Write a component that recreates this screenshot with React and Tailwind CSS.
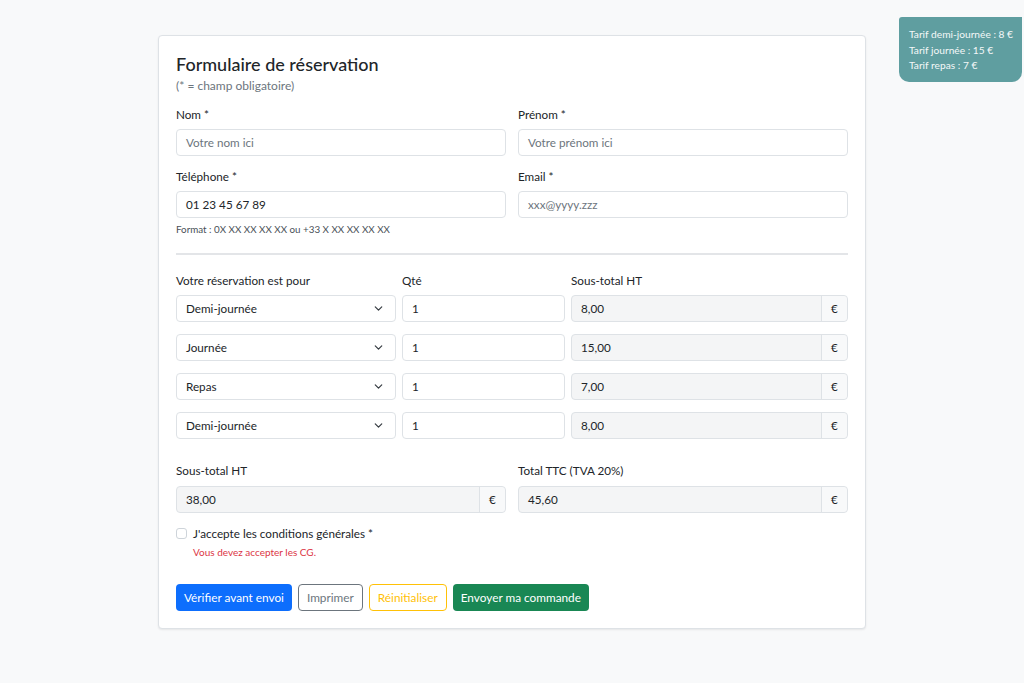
import { ChevronDown } from "lucide-react";

const lines = [
  { type: "Demi-journée", qty: "1", sub: "8,00" },
  { type: "Journée", qty: "1", sub: "15,00" },
  { type: "Repas", qty: "1", sub: "7,00" },
  { type: "Demi-journée", qty: "1", sub: "8,00" },
];

function Field({ label, value, placeholder }) {
  return (
    <div className="flex flex-col">
      <label className="text-[11.7px] text-[#212529] leading-[15px] mb-[7px]">{label}</label>
      <div className="h-[27px] border border-[#dee2e6] rounded-[4px] bg-white px-[9px] flex items-center text-[11.7px]">
        {value ? <span className="text-[#212529]">{value}</span> : <span className="text-[#6c757d]">{placeholder}</span>}
      </div>
    </div>
  );
}

function Money({ value }) {
  return (
    <div className="flex h-[27px] border border-[#dee2e6] rounded-[4px] bg-[#f4f5f6] text-[11.7px] text-[#212529]">
      <div className="flex-1 flex items-center px-[9px]">{value}</div>
      <div className="w-[26px] border-l border-[#dee2e6] flex items-center justify-center bg-[#f8f9fa] rounded-r-[4px]">€</div>
    </div>
  );
}

export default function App() {
  return (
    <div className="min-h-[683px] bg-[#f8f9fa] relative" style={{ fontFamily: 'Lato, "Noto Sans", sans-serif' }}>
      <div className="absolute right-[2px] top-[17px] w-[123px] h-[65px] bg-[#5f9ea0] text-[#f4f8f8] text-[10.2px] leading-[15.5px] pl-[10px] pt-[10px] rounded-tl-[3px] rounded-b-[10px]">
        <div>Tarif demi-journée : 8 €</div>
        <div>Tarif journée : 15 €</div>
        <div>Tarif repas : 7 €</div>
      </div>

      <div className="pt-[35px] pl-[158px]">
        <div className="w-[708px] h-[594px] bg-white border border-[#dee2e6] rounded-[4px] shadow-[0_1px_2px_rgba(0,0,0,0.08)] px-[17px] pt-[16px]">
          <h1 className="text-[18px] font-medium text-[#212529] leading-[24px]">Formulaire de réservation</h1>
          <p className="text-[12px] text-[#6c757d] leading-[14px] mt-[3px]">(* = champ obligatoire)</p>

          <div className="grid grid-cols-2 gap-x-[12px] mt-[14px]">
            <Field label="Nom *" placeholder="Votre nom ici" />
            <Field label="Prénom *" placeholder="Votre prénom ici" />
          </div>
          <div className="grid grid-cols-2 gap-x-[12px] mt-[13px]">
            <Field label="Téléphone *" value="01 23 45 67 89" />
            <Field label="Email *" placeholder="xxx@yyyy.zzz" />
          </div>
          <p className="text-[9.8px] text-[#495057] mt-[5px] leading-[12px]">Format : 0X XX XX XX XX ou +33 X XX XX XX XX</p>

          <hr className="border-t-2 border-[#e3e5e8] mt-[18px]" />

          <div className="grid grid-cols-[220px_163px_1fr] gap-x-[6px] mt-[18px]">
            <label className="text-[11.7px] text-[#212529] leading-[15px]">Votre réservation est pour</label>
            <label className="text-[11.7px] text-[#212529] leading-[15px]">Qté</label>
            <label className="text-[11.7px] text-[#212529] leading-[15px]">Sous-total HT</label>
          </div>
          <div className="flex flex-col gap-[12px] mt-[7px]">
            {lines.map((l, i) => (
              <div key={i} className="grid grid-cols-[220px_163px_1fr] gap-x-[6px]">
                <div className="h-[27px] border border-[#dee2e6] rounded-[4px] bg-white pl-[9px] pr-[10px] flex items-center justify-between text-[11.7px] text-[#212529]">
                  <span>{l.type}</span>
                  <ChevronDown size={13} strokeWidth={2.2} className="text-[#343a40]" />
                </div>
                <div className="h-[27px] border border-[#dee2e6] rounded-[4px] bg-white px-[9px] flex items-center text-[11.7px] text-[#212529]">{l.qty}</div>
                <Money value={l.sub} />
              </div>
            ))}
          </div>

          <div className="grid grid-cols-2 gap-x-[12px] mt-[24px]">
            <div>
              <label className="block text-[11.7px] text-[#212529] leading-[15px] mb-[8px]">Sous-total HT</label>
              <Money value="38,00" />
            </div>
            <div>
              <label className="block text-[11.7px] text-[#212529] leading-[15px] mb-[8px]">Total TTC (TVA 20%)</label>
              <Money value="45,60" />
            </div>
          </div>

          <div className="flex items-center gap-[6px] mt-[13px]">
            <span className="w-[11px] h-[11px] border border-[#ced4da] rounded-[3px] bg-white" />
            <span className="text-[11.7px] text-[#212529] leading-[15px]">J'accepte les conditions générales *</span>
          </div>
          <p className="text-[10px] text-[#dc3545] ml-[17px] mt-[5px] leading-[12px]">Vous devez accepter les CG.</p>

          <div className="flex gap-[6px] mt-[26px]">
            <button className="h-[27px] px-[8px] rounded-[4px] bg-[#0d6efd] text-white text-[11.8px]">Vérifier avant envoi</button>
            <button className="h-[27px] px-[8px] rounded-[4px] border border-[#6c757d] text-[#6c757d] text-[11.8px]">Imprimer</button>
            <button className="h-[27px] px-[8px] rounded-[4px] border border-[#ffc107] text-[#ffc107] text-[11.8px]">Réinitialiser</button>
            <button className="h-[27px] px-[8px] rounded-[4px] bg-[#198754] text-white text-[11.8px]">Envoyer ma commande</button>
          </div>
        </div>
      </div>
    </div>
  );
}
